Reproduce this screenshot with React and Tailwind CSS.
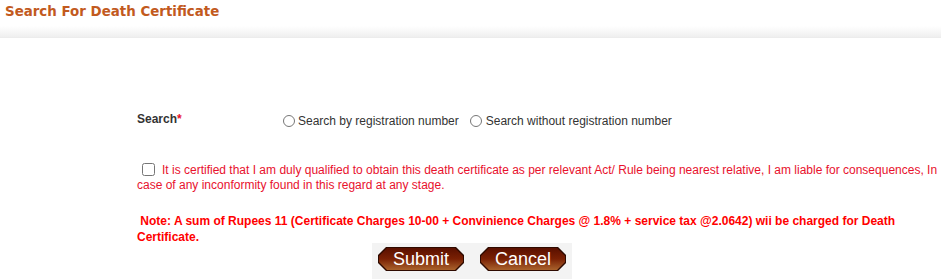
import React, { useState } from 'react';

const octagon = '[clip-path:polygon(8px_0,calc(100%-8px)_0,100%_8px,100%_calc(100%-8px),calc(100%-8px)_100%,8px_100%,0_calc(100%-8px),0_8px)]';

function BrownButton({ children }) {
  return (
    <div className={`p-px bg-[#2e0a00] ${octagon}`}>
      <button
        type="button"
        className={`block h-[22px] px-[14px] bg-gradient-to-b from-[#5a1000] via-[#7a2004] to-[#a9622c] text-white text-[18px] leading-[22px] font-['Liberation_Sans',Arial,sans-serif] ${octagon}`}
      >
        {children}
      </button>
    </div>
  );
}

export default function App() {
  const [mode, setMode] = useState('');
  const [agree, setAgree] = useState(false);

  return (
    <div className="w-[941px] h-[279px] bg-white overflow-hidden font-['Liberation_Sans',Arial,sans-serif] text-[12px]">
      {/* Header */}
      <div className="h-[38px] bg-gradient-to-b from-white from-70% to-[#efefef] border-b border-[#ececec] pl-[5px] pt-[3px]">
        <h1 className="font-['DejaVu_Sans',Verdana,sans-serif] font-bold text-[13.4px] text-[#c25a1e] leading-[18px]">
          Search For Death Certificate
        </h1>
      </div>

      {/* Form */}
      <div className="pl-[137px]">
        <div className="flex items-start mt-[72px] h-[20px]">
          <div className="w-[146px] font-bold text-[#333]">
            Search<span className="text-[#e8112d]">*</span>
          </div>
          <label className="flex items-center mt-[2px] text-[#333]">
            <input
              type="radio"
              name="mode"
              checked={mode === 'reg'}
              onChange={() => setMode('reg')}
              className="w-[12px] h-[12px] m-0 mr-[3px]"
            />
            Search by registration number
          </label>
          <label className="flex items-center mt-[2px] ml-[11px] text-[#333]">
            <input
              type="radio"
              name="mode"
              checked={mode === 'noreg'}
              onChange={() => setMode('noreg')}
              className="w-[12px] h-[12px] m-0 mr-[4px]"
            />
            Search without registration number
          </label>
        </div>

        <p className="mt-[33px] text-[#e8112d] leading-[15px]">
          <input
            type="checkbox"
            checked={agree}
            onChange={(e) => setAgree(e.target.checked)}
            className="w-[13px] h-[13px] ml-[5px] mr-[7px] align-[-2px]"
          />
          It is certified that I am duly qualified to obtain this death certificate as per relevant Act/ Rule being nearest relative, I am liable for consequences, In case of any inconformity found in this regard at any stage.
        </p>

        <p className="mt-[20px] text-[#ff0000] font-bold leading-[16px] pr-[40px]">
          &nbsp;Note: A sum of Rupees 11 (Certificate Charges 10-00 + Convinience Charges @ 1.8% + service tax @2.0642) wii be charged for Death Certificate.
        </p>
      </div>

      {/* Buttons */}
      <div className="flex justify-center -mt-[2px]">
        <div className="ml-[3px] flex gap-[16px] bg-[#f3f3f3] px-[6px] pt-[4px] pb-[10px]">
          <BrownButton>Submit</BrownButton>
          <BrownButton>Cancel</BrownButton>
        </div>
      </div>
    </div>
  );
}
